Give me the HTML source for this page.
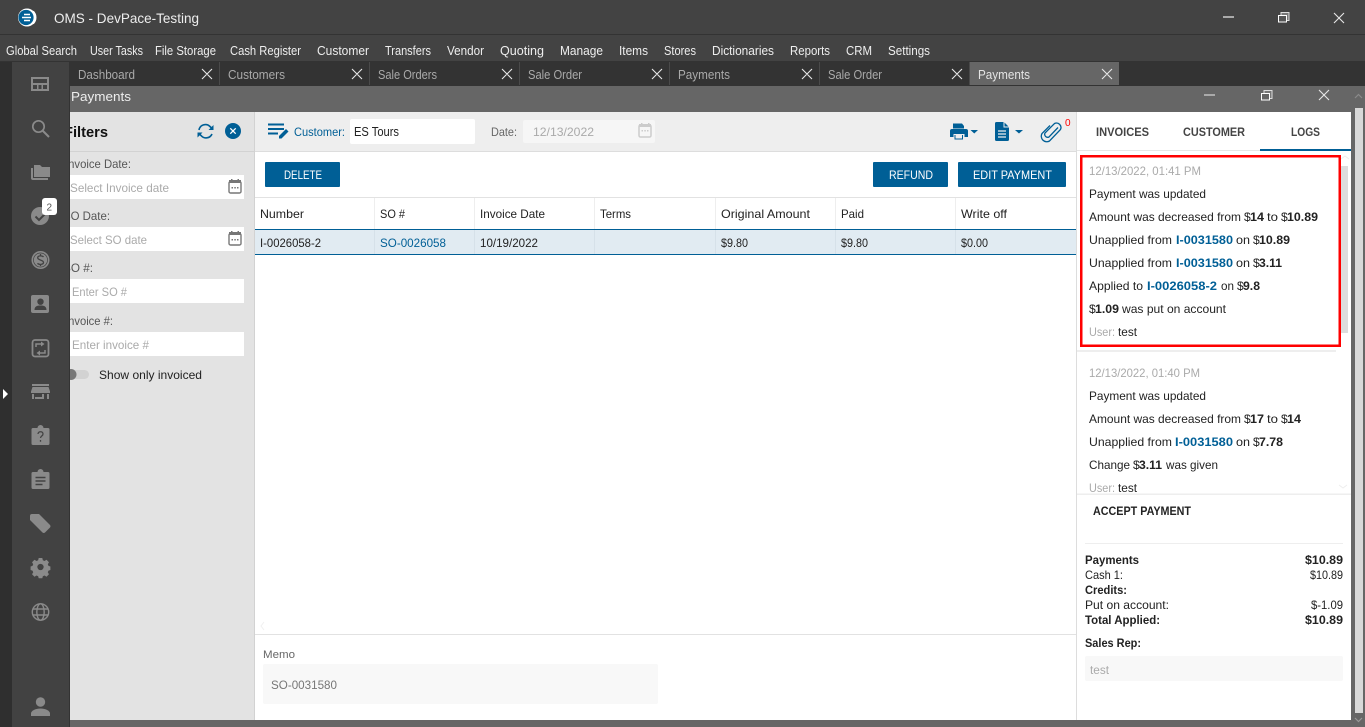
<!DOCTYPE html>
<html><head><meta charset="utf-8"><title>OMS - DevPace-Testing</title>
<style>
html,body{margin:0;padding:0;width:1365px;height:727px;overflow:hidden;background:#434343}
svg{display:block;position:absolute;left:0;top:0}
text{font-family:"Liberation Sans",sans-serif;font-size:12px;fill:#222;white-space:pre}
.m{fill:#eee;font-size:12.5px}
.t{fill:#aaa;font-size:12.5px}
.b{font-weight:bold}
.l{fill:#005f96;font-weight:bold}
.g{fill:#aaa}
.w{fill:#fff}
.d{fill:#555}
.ic{fill:#8a8a8a}
.bl{fill:#005f96}
</style></head><body>
<svg width="1365" height="727" viewBox="0 0 1365 727" xmlns="http://www.w3.org/2000/svg">
<defs><clipPath id="logclip"><rect x="1077" y="152" width="274" height="342"/></clipPath></defs>
<!-- chrome -->
<rect width="1365" height="727" fill="#434343"/>
<rect y="34" width="1365" height="1" fill="#333"/>
<rect y="61" width="1365" height="25" fill="#333"/>
<rect x="70" y="86" width="1295" height="641" fill="#666"/>
<!-- logo -->
<circle cx="27" cy="17.5" r="9" fill="#fff"/><circle cx="26" cy="17.5" r="7.6" fill="#005f96"/>
<path d="M24 14.5h6M22 17.5h9M24 20.5h6" stroke="#fff" stroke-width="1.4"/><path d="M33 11.5a8.5 8.5 0 0 1 0 12" stroke="#fff" stroke-width="2" fill="none"/>
<text x="54" y="23" textLength="145" lengthAdjust="spacingAndGlyphs" style="font-size:14px;fill:#eee">OMS - DevPace-Testing</text>
<!-- window controls -->
<rect x="1223" y="16" width="11" height="2" fill="#aaa"/>
<rect x="1281" y="12.5" width="8" height="8" fill="#777" stroke="#ddd"/><rect x="1278.5" y="15.5" width="8" height="6.5" fill="#555" stroke="#fff"/>
<path d="M1334 13l10 10M1344 13l-10 10" stroke="#e8e8e8" stroke-width="1.1"/>
<!-- menu -->
<text class="m" x="6" y="55" textLength="71" lengthAdjust="spacingAndGlyphs">Global Search</text>
<text class="m" x="90" y="55" textLength="53" lengthAdjust="spacingAndGlyphs">User Tasks</text>
<text class="m" x="155" y="55" textLength="61" lengthAdjust="spacingAndGlyphs">File Storage</text>
<text class="m" x="230" y="55" textLength="71" lengthAdjust="spacingAndGlyphs">Cash Register</text>
<text class="m" x="317" y="55" textLength="52" lengthAdjust="spacingAndGlyphs">Customer</text>
<text class="m" x="385" y="55" textLength="46" lengthAdjust="spacingAndGlyphs">Transfers</text>
<text class="m" x="447" y="55" textLength="37" lengthAdjust="spacingAndGlyphs">Vendor</text>
<text class="m" x="500" y="55" textLength="44" lengthAdjust="spacingAndGlyphs">Quoting</text>
<text class="m" x="560" y="55" textLength="43" lengthAdjust="spacingAndGlyphs">Manage</text>
<text class="m" x="619" y="55" textLength="29" lengthAdjust="spacingAndGlyphs">Items</text>
<text class="m" x="664" y="55" textLength="32" lengthAdjust="spacingAndGlyphs">Stores</text>
<text class="m" x="712" y="55" textLength="62" lengthAdjust="spacingAndGlyphs">Dictionaries</text>
<text class="m" x="790" y="55" textLength="40" lengthAdjust="spacingAndGlyphs">Reports</text>
<text class="m" x="846" y="55" textLength="26" lengthAdjust="spacingAndGlyphs">CRM</text>
<text class="m" x="888" y="55" textLength="42" lengthAdjust="spacingAndGlyphs">Settings</text>
<!-- tabs -->
<rect x="970" y="62" width="149" height="23" fill="#666"/>
<g fill="#4a4a4a"><rect x="219" y="62" width="1" height="23"/><rect x="369" y="62" width="1" height="23"/><rect x="519" y="62" width="1" height="23"/><rect x="669" y="62" width="1" height="23"/><rect x="819" y="62" width="1" height="23"/><rect x="969" y="62" width="1" height="23"/></g>
<text class="t" x="78" y="79" textLength="57" lengthAdjust="spacingAndGlyphs">Dashboard</text>
<text class="t" x="228" y="79" textLength="57" lengthAdjust="spacingAndGlyphs">Customers</text>
<text class="t" x="378" y="79" textLength="59" lengthAdjust="spacingAndGlyphs">Sale Orders</text>
<text class="t" x="528" y="79" textLength="54" lengthAdjust="spacingAndGlyphs">Sale Order</text>
<text class="t" x="678" y="79" textLength="52" lengthAdjust="spacingAndGlyphs">Payments</text>
<text class="t" x="828" y="79" textLength="54" lengthAdjust="spacingAndGlyphs">Sale Order</text>
<text class="t" x="978" y="79" textLength="52" lengthAdjust="spacingAndGlyphs" style="fill:#e4e4e4">Payments</text>
<path d="M202 69l10 10M212 69l-10 10M352 69l10 10M362 69l-10 10M502 69l10 10M512 69l-10 10M652 69l10 10M662 69l-10 10M802 69l10 10M812 69l-10 10M952 69l10 10M962 69l-10 10M1102 69l10 10M1112 69l-10 10" stroke="#e8e8e8" stroke-width="1.1"/>
<!-- panel header -->
<text x="71" y="101" textLength="60" lengthAdjust="spacingAndGlyphs" style="font-size:13px;fill:#eee">Payments</text>
<rect x="1204" y="94" width="11" height="2" fill="#aaa"/>
<rect x="1264" y="90.5" width="8" height="8" fill="#777" stroke="#ddd"/><rect x="1261.5" y="93.5" width="8" height="6.5" fill="#666" stroke="#fff"/>
<path d="M1319 90l10 10M1329 90l-10 10" stroke="#e8e8e8" stroke-width="1.1"/>
<!-- outer scrollbar -->
<rect x="1351" y="86" width="14" height="641" fill="#666"/>
<rect x="1355" y="108" width="8" height="605" fill="#d8d8d8"/>
<path d="M1355 98l3.5-3.5 3.5 3.5" stroke="#8a8a8a" stroke-width="1.2" fill="none"/>
<path d="M1355 718l3.5 3.5 3.5-3.5" stroke="#999" stroke-width="1.2" fill="none"/>
<!-- content backgrounds -->
<rect x="70" y="112" width="184" height="608" fill="#e3e3e3"/>
<rect x="254" y="112" width="1" height="608" fill="#d2d2d2"/>
<rect x="255" y="112" width="821" height="608" fill="#fff"/>
<rect x="1076" y="112" width="1" height="608" fill="#ddd"/>
<rect x="1077" y="112" width="274" height="608" fill="#fff"/>
<!-- filters -->
<rect x="70" y="151" width="184" height="1" fill="#d2d2d2"/>
<text class="b" x="64" y="137" textLength="44" lengthAdjust="spacingAndGlyphs" style="font-size:14.5px;fill:#111">Filters</text>
<g fill="none" stroke="#005f96" stroke-width="1.6"><path d="M199 130a6.5 6.500 0 0 1 11-3.500l1.500 1.500"/><path d="M212 134a6.5 6.500 0 0 1-11 1.500l-1.500-1.500"/></g>
<path d="M213.500 125v5h-5zM197.500 137.500v-5h5z" fill="#005f96"/>
<circle cx="233" cy="131" r="8" fill="#005f96"/><path d="M230.300 128.300l5.400 5.400M235.700 128.300l-5.400 5.400" stroke="#fff" stroke-width="1.3"/>
<text class="d" x="65" y="168" textLength="66" lengthAdjust="spacingAndGlyphs">Invoice Date:</text>
<rect x="70" y="175" width="174" height="24" fill="#fff"/>
<text class="g" x="70" y="192" textLength="99" lengthAdjust="spacingAndGlyphs">Select Invoice date</text>
<text class="d" x="63" y="220" textLength="47" lengthAdjust="spacingAndGlyphs">SO Date:</text>
<rect x="70" y="227" width="174" height="24" fill="#fff"/>
<text class="g" x="70" y="244" textLength="77" lengthAdjust="spacingAndGlyphs">Select SO date</text>
<g fill="none" stroke="#777" stroke-width="1.4"><rect x="229" y="181.5" width="12" height="11.5" rx="1.5"/><rect x="229" y="233.5" width="12" height="11.5" rx="1.5"/></g>
<path d="M229 180h12v3h-12zM231 179h1.500v2h-1.500zM237.500 179h1.500v2h-1.500zM229 232h12v3h-12zM231 231h1.500v2h-1.500zM237.500 231h1.500v2h-1.500z" fill="#777"/>
<path d="M231.500 187h1.500v1.500h-1.500zM234.300 187h1.500v1.500h-1.500zM237 187h1.500v1.500h-1.500zM231.500 239h1.500v1.500h-1.500zM234.300 239h1.500v1.500h-1.500zM237 239h1.500v1.500h-1.500z" fill="#777"/>
<text class="d" x="63" y="272" textLength="30" lengthAdjust="spacingAndGlyphs">SO #:</text>
<rect x="70" y="279" width="174" height="24" fill="#fff"/>
<text class="g" x="72" y="296" textLength="55" lengthAdjust="spacingAndGlyphs">Enter SO #</text>
<text class="d" x="65" y="325" textLength="48" lengthAdjust="spacingAndGlyphs">Invoice #:</text>
<rect x="70" y="332" width="174" height="24" fill="#fff"/>
<text class="g" x="72" y="349" textLength="77" lengthAdjust="spacingAndGlyphs">Enter invoice #</text>
<rect x="68" y="370" width="21" height="9" rx="4.5" fill="#d2d2d2"/>
<circle cx="71" cy="374.500" r="5.500" fill="#777"/>
<text x="99" y="379" textLength="103" lengthAdjust="spacingAndGlyphs">Show only invoiced</text>
<!-- toolbar -->
<rect x="255" y="112" width="821" height="39" fill="#eee"/>
<rect x="255" y="151" width="821" height="1" fill="#ddd"/>
<path d="M268 124.500h16M268 129h16M268 133.500h10" stroke="#005f96" stroke-width="2" fill="none"/>
<path d="M279 138.500v-2.500l7-7 2.500 2.500-7 7z" fill="#005f96"/>
<text class="bl" x="294" y="136" textLength="51" lengthAdjust="spacingAndGlyphs">Customer:</text>
<rect x="350" y="119" width="125" height="25" rx="2" fill="#fff"/>
<text x="354" y="136" textLength="45" lengthAdjust="spacingAndGlyphs" style="font-size:12.5px">ES Tours</text>
<text style="fill:#666" x="491" y="136" textLength="26" lengthAdjust="spacingAndGlyphs">Date:</text>
<rect x="523" y="120" width="132" height="23" rx="2" fill="#f6f6f6"/>
<text class="g" x="533" y="136" textLength="61" lengthAdjust="spacingAndGlyphs">12/13/2022</text>
<rect x="639" y="125" width="12" height="12" rx="1.5" fill="none" stroke="#ccc" stroke-width="1.5"/>
<path d="M639 124h12v3h-12zM641 123h1.500v2h-1.500zM648 123h1.500v2h-1.500zM641.500 130h1.500v1.500h-1.500zM644.300 130h1.500v1.500h-1.500zM647 130h1.500v1.500h-1.500z" fill="#ccc"/>
<!-- printer -->
<path d="M953 123.500h9l2 2.500v2.500h-11z" fill="#005f96"/><path d="M951 129h15a2 2 0 0 1 2 2v6h-3.500v-3h-11v3h-3.500v-6a2 2 0 0 1 2-2z" fill="#005f96"/><rect x="954.500" y="135" width="8.500" height="4.500" fill="#005f96"/><rect x="955.500" y="135" width="6.500" height="3.500" fill="#eee"/>
<path d="M970.500 130h7.500l-3.750 3.500z" fill="#005f96"/>
<!-- doc -->
<path d="M995 122h9l5 5v12.500a1.500 1.500 0 0 1-1.500 1.500h-11a1.500 1.500 0 0 1-1.500-1.500v-16a1.500 1.500 0 0 1 1.500-1.500z" fill="#005f96"/>
<path d="M998 131h8M998 134h8M998 137h8" stroke="#eee" stroke-width="1.3"/><path d="M1004 122v5h5" stroke="#eee" stroke-width="1" fill="none"/>
<path d="M1015 130h8l-4 3.500z" fill="#005f96"/>
<!-- clip -->
<path d="M1057 127l-9 9.500a3 3 0 0 1-4-4l9.500-9.500a4.500 4.500 0 0 1 6 6l-11 11.500a5.500 5.500 0 0 1-7.500-7.500l8-8" transform="translate(1 0.500)" fill="none" stroke="#005f96" stroke-width="1.3"/>
<text x="1065" y="126" style="font-size:10px;fill:#f00">0</text>
<!-- buttons -->
<rect x="265" y="162" width="75" height="25" rx="1" fill="#005f96"/>
<text class="w" x="284" y="179" textLength="38" lengthAdjust="spacingAndGlyphs">DELETE</text>
<rect x="873" y="162" width="75" height="25" rx="1" fill="#005f96"/>
<text class="w" x="889" y="179" textLength="44" lengthAdjust="spacingAndGlyphs">REFUND</text>
<rect x="958" y="162" width="108" height="25" rx="1" fill="#005f96"/>
<text class="w" x="973" y="179" textLength="79" lengthAdjust="spacingAndGlyphs">EDIT PAYMENT</text>
<!-- table -->
<rect x="255" y="197" width="821" height="1" fill="#e2e2e2"/>
<g fill="#eee"><rect x="374" y="198" width="1" height="31"/><rect x="474" y="198" width="1" height="31"/><rect x="594" y="198" width="1" height="31"/><rect x="715" y="198" width="1" height="31"/><rect x="835" y="198" width="1" height="31"/><rect x="955" y="198" width="1" height="31"/></g>
<text x="260" y="218" textLength="44" lengthAdjust="spacingAndGlyphs">Number</text>
<text x="380" y="218" textLength="25" lengthAdjust="spacingAndGlyphs">SO #</text>
<text x="480" y="218" textLength="65" lengthAdjust="spacingAndGlyphs">Invoice Date</text>
<text x="600" y="218" textLength="31" lengthAdjust="spacingAndGlyphs">Terms</text>
<text x="721" y="218" textLength="89" lengthAdjust="spacingAndGlyphs">Original Amount</text>
<text x="841" y="218" textLength="23" lengthAdjust="spacingAndGlyphs">Paid</text>
<text x="961" y="218" textLength="46" lengthAdjust="spacingAndGlyphs">Write off</text>
<rect x="255" y="229" width="821" height="26" fill="#e1ebf2"/>
<rect x="255" y="229" width="821" height="1" fill="#005f96"/><rect x="255" y="254" width="821" height="1" fill="#005f96"/>
<g fill="#d6e1e9"><rect x="374" y="230" width="1" height="24"/><rect x="474" y="230" width="1" height="24"/><rect x="594" y="230" width="1" height="24"/><rect x="715" y="230" width="1" height="24"/><rect x="835" y="230" width="1" height="24"/><rect x="955" y="230" width="1" height="24"/></g>
<text x="260" y="247" textLength="61" lengthAdjust="spacingAndGlyphs">I-0026058-2</text>
<text class="bl" x="380" y="247" textLength="66" lengthAdjust="spacingAndGlyphs">SO-0026058</text>
<text x="480" y="247" textLength="58" lengthAdjust="spacingAndGlyphs">10/19/2022</text>
<text x="721" y="247" textLength="27" lengthAdjust="spacingAndGlyphs">$9.80</text>
<text x="841" y="247" textLength="27" lengthAdjust="spacingAndGlyphs">$9.80</text>
<text x="961" y="247" textLength="27" lengthAdjust="spacingAndGlyphs">$0.00</text>
<!-- memo -->
<rect x="255" y="634" width="821" height="1" fill="#e2e2e2"/>
<path d="M264 622l-3 4 3 4" stroke="#f0f0f0" fill="none"/>
<text x="263" y="658" textLength="32" lengthAdjust="spacingAndGlyphs" style="font-size:11px;fill:#666">Memo</text>
<rect x="263" y="664" width="395" height="40" rx="2" fill="#f8f8f8"/>
<text x="271" y="689" textLength="66" lengthAdjust="spacingAndGlyphs" style="fill:#777">SO-0031580</text>
<!-- right tabs -->
<rect x="1077" y="150" width="274" height="1" fill="#e6e6e6"/>
<rect x="1260" y="149" width="91" height="2" fill="#005f96"/>
<g style="font-weight:600"><text x="1096" y="136" textLength="53" lengthAdjust="spacingAndGlyphs" style="fill:#444">INVOICES</text>
<text x="1183" y="136" textLength="62" lengthAdjust="spacingAndGlyphs" style="fill:#444">CUSTOMER</text>
<text x="1291" y="136" textLength="29" lengthAdjust="spacingAndGlyphs" style="fill:#444">LOGS</text></g>
<!-- logs -->
<rect x="1341" y="166" width="7" height="167" fill="#ddd"/>
<path d="M1341 159l4-3 4 3" stroke="#eee" fill="none"/>
<path d="M1339 485l4 3 4-3" stroke="#eee" fill="none"/>
<rect x="1077" y="350" width="259" height="2" fill="#eee"/>
<g clip-path="url(#logclip)">
<text class="g" x="1089" y="175" textLength="112" lengthAdjust="spacingAndGlyphs">12/13/2022, 01:41 PM</text>
<text x="1089" y="198" textLength="117" lengthAdjust="spacingAndGlyphs">Payment was updated</text>
<text x="1089" y="221" textLength="152" lengthAdjust="spacingAndGlyphs">Amount was decreased from</text><text x="1244" y="221">$</text><text class="b" x="1250" y="221" textLength="14" lengthAdjust="spacingAndGlyphs">14</text><text x="1267" y="221" textLength="11" lengthAdjust="spacingAndGlyphs">to</text><text x="1281" y="221">$</text><text class="b" x="1287" y="221" textLength="31" lengthAdjust="spacingAndGlyphs">10.89</text>
<text x="1089" y="244" textLength="83" lengthAdjust="spacingAndGlyphs">Unapplied from</text><text class="l" x="1176" y="244" textLength="57" lengthAdjust="spacingAndGlyphs">I-0031580</text><text x="1236" y="244" textLength="14" lengthAdjust="spacingAndGlyphs">on</text><text x="1253" y="244">$</text><text class="b" x="1259" y="244" textLength="31" lengthAdjust="spacingAndGlyphs">10.89</text>
<text x="1089" y="267" textLength="83" lengthAdjust="spacingAndGlyphs">Unapplied from</text><text class="l" x="1176" y="267" textLength="57" lengthAdjust="spacingAndGlyphs">I-0031580</text><text x="1236" y="267" textLength="14" lengthAdjust="spacingAndGlyphs">on</text><text x="1253" y="267">$</text><text class="b" x="1259" y="267" textLength="23" lengthAdjust="spacingAndGlyphs">3.11</text>
<text x="1089" y="290" textLength="54" lengthAdjust="spacingAndGlyphs">Applied to</text><text class="l" x="1147" y="290" textLength="70" lengthAdjust="spacingAndGlyphs">I-0026058-2</text><text x="1221" y="290" textLength="13" lengthAdjust="spacingAndGlyphs">on</text><text x="1237" y="290">$</text><text class="b" x="1243" y="290" textLength="17" lengthAdjust="spacingAndGlyphs">9.8</text>
<text x="1089" y="313">$</text><text class="b" x="1095" y="313" textLength="24" lengthAdjust="spacingAndGlyphs">1.09</text><text x="1122" y="313" textLength="104" lengthAdjust="spacingAndGlyphs">was put on account</text>
<text class="g" x="1089" y="336" textLength="26" lengthAdjust="spacingAndGlyphs">User:</text><text x="1118" y="336" textLength="19" lengthAdjust="spacingAndGlyphs">test</text>

<text class="g" x="1089" y="377" textLength="111" lengthAdjust="spacingAndGlyphs">12/13/2022, 01:40 PM</text>
<text x="1089" y="400" textLength="117" lengthAdjust="spacingAndGlyphs">Payment was updated</text>
<text x="1089" y="423" textLength="152" lengthAdjust="spacingAndGlyphs">Amount was decreased from</text><text x="1244" y="423">$</text><text class="b" x="1250" y="423" textLength="14" lengthAdjust="spacingAndGlyphs">17</text><text x="1267" y="423" textLength="11" lengthAdjust="spacingAndGlyphs">to</text><text x="1281" y="423">$</text><text class="b" x="1287" y="423" textLength="14" lengthAdjust="spacingAndGlyphs">14</text>
<text x="1089" y="446" textLength="83" lengthAdjust="spacingAndGlyphs">Unapplied from</text><text class="l" x="1175" y="446" textLength="58" lengthAdjust="spacingAndGlyphs">I-0031580</text><text x="1236" y="446" textLength="14" lengthAdjust="spacingAndGlyphs">on</text><text x="1253" y="446">$</text><text class="b" x="1259" y="446" textLength="24" lengthAdjust="spacingAndGlyphs">7.78</text>
<text x="1089" y="469" textLength="41" lengthAdjust="spacingAndGlyphs">Change</text><text x="1133" y="469">$</text><text class="b" x="1139" y="469" textLength="23" lengthAdjust="spacingAndGlyphs">3.11</text><text x="1166" y="469" textLength="52" lengthAdjust="spacingAndGlyphs">was given</text>
<text class="g" x="1089" y="492" textLength="26" lengthAdjust="spacingAndGlyphs">User:</text><text x="1118" y="492" textLength="19" lengthAdjust="spacingAndGlyphs">test</text>
</g>
<rect x="1081.25" y="156.25" width="258.5" height="189.5" fill="none" stroke="#f00" stroke-width="2.5"/>
<!-- accept payment -->
<rect x="1077" y="493.5" width="274" height="1.5" fill="#eee"/>
<text class="b" x="1093" y="515" textLength="98" lengthAdjust="spacingAndGlyphs">ACCEPT PAYMENT</text>
<rect x="1085" y="543" width="258" height="1" fill="#eee"/>
<text class="b" x="1085" y="564" textLength="54" lengthAdjust="spacingAndGlyphs">Payments</text><text class="b" x="1305" y="564" textLength="38" lengthAdjust="spacingAndGlyphs">$10.89</text>
<text x="1085" y="579" textLength="38" lengthAdjust="spacingAndGlyphs">Cash 1:</text><text x="1310" y="579" textLength="33" lengthAdjust="spacingAndGlyphs">$10.89</text>
<text class="b" x="1085" y="594" textLength="42" lengthAdjust="spacingAndGlyphs">Credits:</text>
<text x="1085" y="609" textLength="84" lengthAdjust="spacingAndGlyphs">Put on account:</text><text x="1311" y="609" textLength="32" lengthAdjust="spacingAndGlyphs">$-1.09</text>
<text class="b" x="1085" y="624" textLength="75" lengthAdjust="spacingAndGlyphs">Total Applied:</text><text class="b" x="1305" y="624" textLength="38" lengthAdjust="spacingAndGlyphs">$10.89</text>
<text class="b" x="1085" y="647" textLength="56" lengthAdjust="spacingAndGlyphs">Sales Rep:</text>
<rect x="1085" y="656" width="258" height="25" rx="2" fill="#f8f8f8"/>
<text class="g" x="1090" y="674" textLength="19" lengthAdjust="spacingAndGlyphs">test</text>
<!-- sidebar (on top, clips filter text) -->
<rect x="0" y="62" width="12" height="665" fill="#2f2f2f"/>
<rect x="12" y="62" width="57" height="665" fill="#424242"/>
<rect x="69" y="62" width="1" height="665" fill="#333"/>
<path d="M3 389l5 5-5 5z" fill="#fff"/>
<g class="ic">
<!-- dashboard -->
<path fill-rule="evenodd" d="M31 77h18v14H31zM33 79v4h14v-4zM33 85v4h4v-4zM38.500 85v4h3v-4zM43 85v4h4v-4z"/>
<!-- search -->
<circle cx="38.500" cy="126.500" r="5.700" fill="none" stroke="#8a8a8a" stroke-width="1.700"/><path d="M42.500 130.500l6.500 6.500" stroke="#8a8a8a" stroke-width="2"/>
<!-- folder -->
<path d="M34 165h6l2 2h8v10H34zM31 168h2v10h15v2H33a2 2 0 0 1-2-2z"/>
<!-- check -->
<circle cx="40" cy="216" r="9"/><path d="M35.500 216.500l3.500 3.500 6-6" stroke="#424242" stroke-width="2" fill="none"/>
<!-- dollar -->
<circle cx="40.500" cy="260" r="9"/><circle cx="40.500" cy="260" r="7" fill="none" stroke="#424242" stroke-width=".7"/>
<path d="M43.500 257c-1-1.500-5.800-1.800-5.800 .8s5.800 2 5.800 4.600-4.800 2.300-6 .9M40.500 254v2M40.500 264v2" stroke="#424242" stroke-width="1.300" fill="none"/>
<!-- contact -->
<path fill-rule="evenodd" d="M33 295h14a2 2 0 0 1 2 2v14a2 2 0 0 1-2 2H33a2 2 0 0 1-2-2v-14a2 2 0 0 1 2-2zM40.500 298.500a3.200 3.200 0 1 0 0 6.400 3.200 3.200 0 0 0 0-6.400zM34.500 310h12c0-4-3-4.500-6-4.500s-6 .5-6 4.500z"/>
<!-- transfer -->
<rect x="32.500" y="340" width="16" height="16.500" rx="2.500" fill="none" stroke="#8a8a8a" stroke-width="1.800"/>
<path d="M36 347v-3h5" fill="none" stroke="#8a8a8a" stroke-width="1.500"/><path d="M41 341.500l3.500 2.500-3.500 2.500z"/>
<path d="M45 350v3h-5" fill="none" stroke="#8a8a8a" stroke-width="1.500"/><path d="M40 350.500l-3.500 2.500 3.500 2.500z"/>
<!-- store -->
<path d="M32 384h17v2H32zM32.500 387h16l1.500 4.500v1.500H31v-1.500zM32 394h2v5h-2zM47 394h2v5h-2zM35 397h9v2h-9zM42 394h2v4h-2z"/>
<!-- clipboard question -->
<path d="M33 428h4.500a3 3 0 0 1 6 0H48a1.500 1.500 0 0 1 1.500 1.500v14a1.500 1.500 0 0 1-1.500 1.500H33a1.500 1.500 0 0 1-1.500-1.500v-14A1.500 1.500 0 0 1 33 428z"/>
<path d="M38 434c.2-3 5-3 5 0 0 2-2.500 2-2.500 4M40.500 440v1.800" stroke="#424242" stroke-width="1.300" fill="none"/>
<!-- clipboard list -->
<path d="M33 472h4.500a3 3 0 0 1 6 0H48a1.500 1.500 0 0 1 1.500 1.500v14a1.500 1.500 0 0 1-1.500 1.500H33a1.500 1.500 0 0 1-1.500-1.500v-14A1.500 1.500 0 0 1 33 472z"/>
<path d="M35.500 477.500h10M35.500 481h10M35.500 484.500h7" stroke="#424242" stroke-width="1.500"/>
<!-- tag -->
<path d="M32 514h7l11 11a2 2 0 0 1 0 2.500l-5 5a2 2 0 0 1-2.500 0l-12.500-12.500v-4a2 2 0 0 1 2-2z"/>
<!-- gear -->
<path fill-rule="evenodd" d="M38.500 558h4l.6 2.500 1.800.8 2.300-1.300 2.700 2.700-1.300 2.300.8 1.800 2.100.6v4l-2.100.6-.8 1.800 1.300 2.300-2.700 2.700-2.300-1.300-1.800.8-.6 2.200h-4l-.6-2.200-1.800-.8-2.300 1.300-2.700-2.700 1.300-2.300-.8-1.800-2.100-.6v-4l2.100-.6.8-1.800-1.300-2.300 2.700-2.700 2.300 1.300 1.800-.8zM40.500 564.500a3.500 3.500 0 1 0 0 7 3.500 3.500 0 0 0 0-7z" transform="translate(4.050 55.800) scale(.9)"/>
<!-- globe -->
<g fill="none" stroke="#8a8a8a" stroke-width="1.400"><circle cx="40.500" cy="612" r="8.200"/><ellipse cx="40.500" cy="612" rx="3.700" ry="8.200"/><path d="M33 609h15M33 615h15"/></g>
<!-- user -->
<circle cx="40.500" cy="702" r="4.700"/><path d="M31 716v-2.500c0-3 5-5 9.500-5s9.500 2 9.500 5v2.500z"/>
</g>
<rect x="42" y="198" width="15" height="17" rx="3" fill="#fff"/>
<text x="46.500" y="210.500" style="font-size:10px;fill:#555">2</text>
</svg>
</body></html>
